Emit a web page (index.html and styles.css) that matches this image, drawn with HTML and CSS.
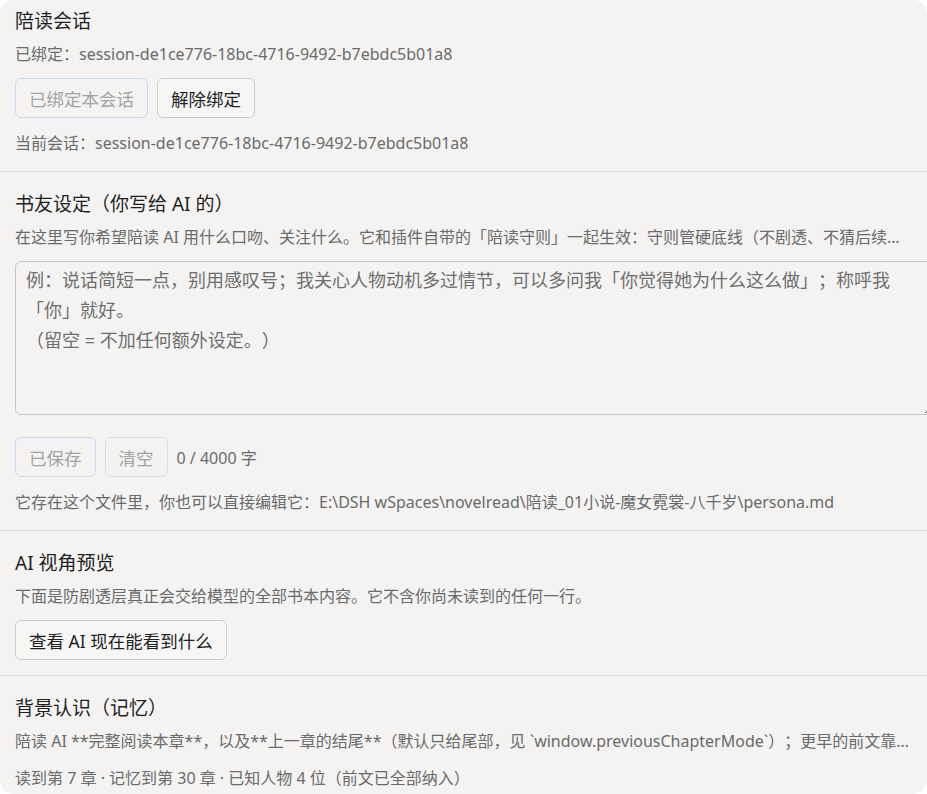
FILE: index.html
```html
<!DOCTYPE html>
<html lang="zh-CN">
<head>
    <meta charset="UTF-8">
    <meta name="viewport" content="width=device-width, initial-scale=1.0">
    <title>陪读设置</title>
    <link rel="stylesheet" href="styles.css">
</head>
<body>
    <div class="panel">
        <!-- 会话绑定 -->
        <div class="sec first">
            <div class="sec-title">陪读会话</div>
            <div class="desc">已绑定：session-de1ce776-18bc-4716-9492-b7ebdc5b01a8</div>
            <div class="btn-row">
                <button class="btn off-blue">已绑定本会话</button>
                <button class="btn">解除绑定</button>
            </div>
            <div class="desc after">当前会话：session-de1ce776-18bc-4716-9492-b7ebdc5b01a8</div>
        </div>

        <!-- 书友设定 -->
        <div class="sec tall">
            <div class="sec-title">书友设定（你写给 AI 的）</div>
            <div class="desc clip">在这里写你希望陪读 AI 用什么口吻、关注什么。它和插件自带的「陪读守则」一起生效：守则管硬底线（不剧透、不猜后续、不替你下结论），这里管语气和关注点。</div>
            <textarea class="persona" placeholder="例：说话简短一点，别用感叹号；我关心人物动机多过情节，可以多问我「你觉得她为什么这么做」；称呼我「你」就好。
（留空 = 不加任何额外设定。）"></textarea>
            <div class="btn-row gap-top">
                <button class="btn off-blue">已保存</button>
                <button class="btn off">清空</button>
                <span class="count">0 / 4000 字</span>
            </div>
            <div class="desc after">它存在这个文件里，你也可以直接编辑它：E:\DSH wSpaces\novelread\陪读_01小说-魔女霓裳-八千岁\persona.md</div>
        </div>

        <!-- 预览 -->
        <div class="sec">
            <div class="sec-title">AI 视角预览</div>
            <div class="desc">下面是防剧透层真正会交给模型的全部书本内容。它不含你尚未读到的任何一行。</div>
            <div class="btn-row">
                <button class="btn">查看 AI 现在能看到什么</button>
            </div>
        </div>

        <!-- 记忆 -->
        <div class="sec">
            <div class="sec-title">背景认识（记忆）</div>
            <div class="desc clip">陪读 AI **完整阅读本章**，以及**上一章的结尾**（默认只给尾部，见 `window.previousChapterMode`）；更早的前文靠记忆摘要，不会整段塞进去。</div>
            <div class="desc after">读到第 7 章 · 记忆到第 30 章 · 已知人物 4 位（前文已全部纳入）</div>
        </div>
    </div>
</body>
</html>
```

FILE: styles.css
```css
*{margin:0;padding:0;box-sizing:border-box;}
body{background:#fff;font-family:"Noto Sans","Noto Sans CJK SC",sans-serif;color:#1f1f1f;text-spacing-trim:space-all;}
.panel{height:794px;background:#f4f3f1;border-radius:14px;overflow:hidden;}
.sec{padding:19px 15px 15px;border-top:1px solid #d9d9d8;}
.sec.first{padding-top:8px;padding-bottom:16px;border-top:none;}
.sec.tall{padding-bottom:16px;}
.sec-title{font-size:19px;line-height:26px;color:#1f1f1f;}
.desc{font-size:16px;line-height:24px;color:#6a6a6a;margin-top:8px;}
.desc.after{margin-top:13px;}
.desc.clip{white-space:nowrap;overflow:hidden;text-overflow:ellipsis;}
.btn-row{display:flex;align-items:center;gap:9px;margin-top:12px;}
.btn-row.gap-top{margin-top:22px;}
.btn{height:40px;padding:0 13px;font-family:inherit;font-size:17.5px;color:#1f1f1f;background:#f6f6f5;border:1px solid #cbcbcb;border-radius:6px;}
.btn.off{color:#a3a3a3;border-color:#dcdcdc;background:#f4f3f1;}
.btn.off-blue{color:#a3a3a3;border-color:#c9d8f2;background:#f4f3f1;}
.count{font-size:16px;color:#6a6a6a;}
.persona{display:block;width:100%;box-sizing:content-box;height:146px;margin-top:12px;padding:3px 10px 3px;font-family:inherit;font-size:18px;line-height:30px;color:#555;background:transparent;border:1px solid #c6c6c6;border-radius:6px;}
.persona::placeholder{color:#6e6e6e;}
```
